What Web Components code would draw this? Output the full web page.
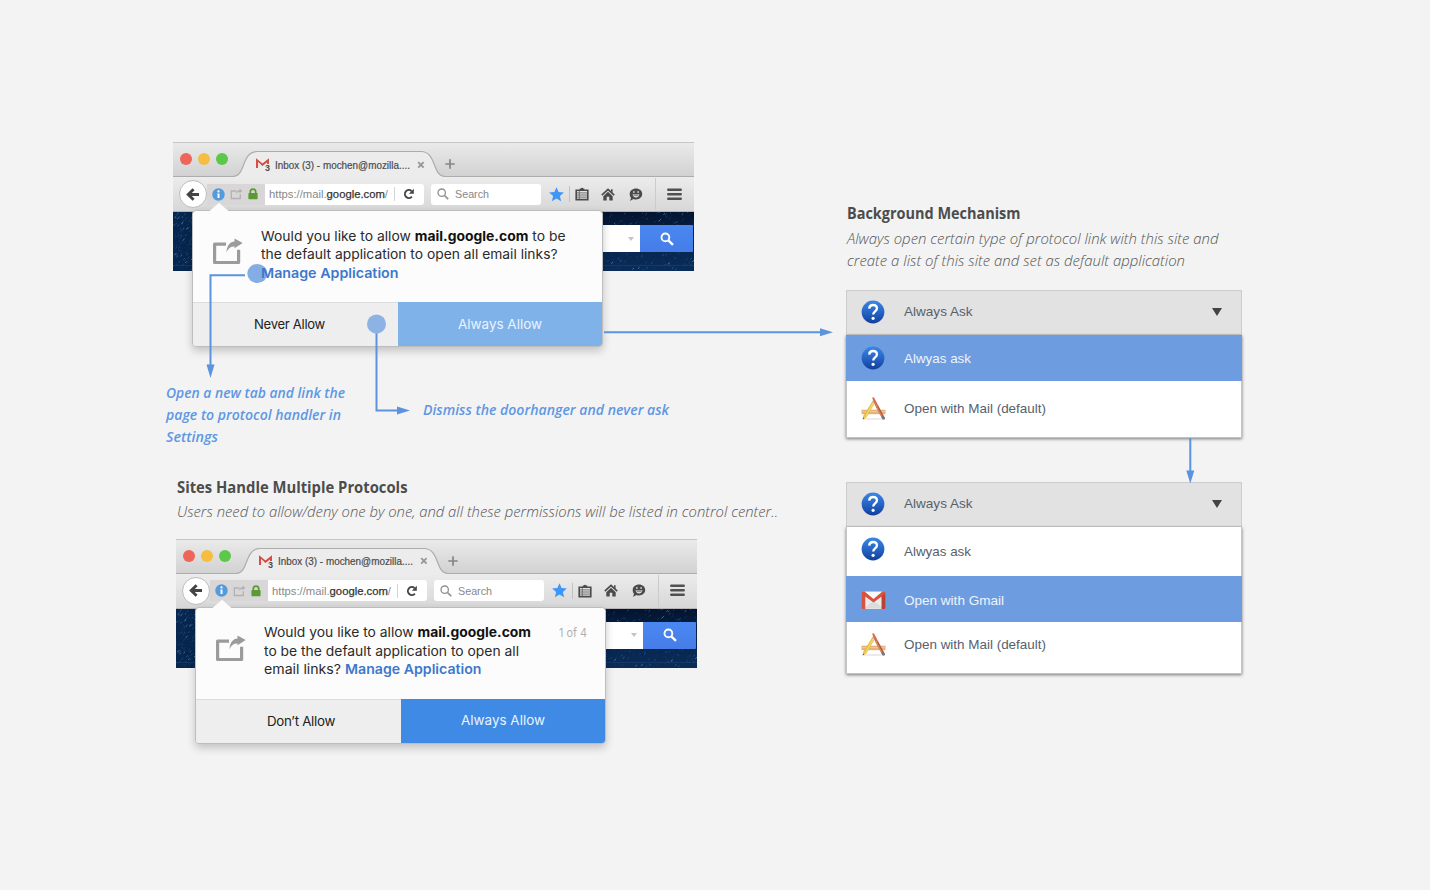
<!DOCTYPE html>
<html lang="en">
<head>
<meta charset="utf-8">
<title>Protocol handler permissions</title>
<style>
html,body{margin:0;background:#f3f3f3}
body{width:1430px;height:890px;overflow:hidden;font-family:"Liberation Sans",Arial,sans-serif}
</style>
</head>
<body>
<spec-board></spec-board>
<script>
const define=(name,css,html,after)=>{
  customElements.define(name,class extends HTMLElement{
    connectedCallback(){
      if(this.shadowRoot)return;
      const root=this.attachShadow({mode:'open'});
      const t=document.createElement('template');
      t.innerHTML='<style>'+css+'</style>'+(typeof html==='function'?html(this):html);
      root.appendChild(t.content.cloneNode(true));
      if(after)after(this,root);
    }
  });
};

/* One line of text set to a fixed measure */
define('fit-line',
 ':host{display:block;white-space:nowrap;flex:none}span{display:inline-block;transform-origin:0 50%}',
 '<span><slot></slot></span>',
 (el,root)=>{
   const w=+el.getAttribute('w'),s=root.querySelector('span');
   const m=s.offsetWidth;
   if(m)s.style.transform='scaleX('+(w/s.getBoundingClientRect().width)+')';
   el.style.width=w+'px';
 });

const ICONS={
 back:[14,13,'<path d="M7.6 1.2 2.2 6.5l5.4 5.3M2.8 6.5H13" fill="none" stroke="#444" stroke-width="2.9"/>'],
 info:[13,13,'<circle cx="6.5" cy="6.5" r="6.2" fill="#549bdc"/><circle cx="6.5" cy="3.4" r="1.1" fill="#fff"/><path d="M5.300 5.6h2.200v4.500H5.600V6.600H5.300z" fill="#fff"/>'],
 shareSmall:[13,12,'<path d="M6.500 3H1.300v7.500h9V6.200" fill="none" stroke="#b3b1b1" stroke-width="1.300"/><path d="M5.700 6.500C6 3.500 7.500 2.300 9.400 2.200V.6l3 2.400-3 2.300V3.900C7.800 3.900 6.600 4.600 5.700 6.500z" fill="#b3b1b1"/>'],
 lock:[10,12,'<path d="M2.300 6V3.900a2.700 2.700 0 0 1 5.400 0V6" fill="none" stroke="#5a9a33" stroke-width="1.700"/><rect x=".4" y="5" width="9.200" height="6.200" rx=".7" fill="#5a9a33"/>'],
 reload:[12,12,'<path d="M8.900 8.700A4 4 0 1 1 8.500 3" fill="none" stroke="#444" stroke-width="1.900"/><path d="M10.800.8v5H5.900z" fill="#444"/>'],
 search:[12,12,'<circle cx="4.700" cy="4.700" r="3.700" fill="none" stroke="#909090" stroke-width="1.300"/><path d="m7.500 7.500 3.700 3.700" stroke="#909090" stroke-width="1.700"/>'],
 searchWhite:[14,14,'<circle cx="5.400" cy="5.400" r="3.900" fill="none" stroke="#fff" stroke-width="1.900"/><path d="m8.300 8.300 4.700 4.500" stroke="#fff" stroke-width="2.400"/>'],
 star:[15,15,'<path d="m7.500.3 2.100 4.800 5.300.5-4 3.500 1.200 5.200-4.600-2.700-4.600 2.700 1.200-5.200-4-3.500 5.300-.5z" fill="#3e96f7"/>'],
 list:[14,14,'<path d="M1.200 3.300h11.600v9.300H1.200z" fill="none" stroke="#4a4a4a" stroke-width="1.600"/><path d="M4.700 3V1.600h1.100a1.300 1.300 0 0 1 2.400 0h1.100V3z" fill="#4a4a4a"/><path d="M2 5.900h10M2 8h10M2 10.100h10M4.300 4v8" stroke="#666" stroke-width=".9"/>'],
 home:[14,13,'<path d="M.8 7.200 7 1.400l6.200 5.800" fill="none" stroke="#4a4a4a" stroke-width="1.700"/><path d="M10 1.300h1.600v3.500L10 3.300zM7 3.800l4.700 4.400v4.300H8.300V8.800H5.700v3.700H2.300V8.200z" fill="#4a4a4a"/>'],
 smile:[14,13,'<path d="M7 .6c3.500 0 6.200 2.300 6.200 5.400S10.500 11.400 7 11.400c-.9 0-1.800-.1-2.600-.5-1 .9-2.200 1.500-3.600 1.500.8-.8 1.200-1.700 1.200-2.700C1 8.700.700 7.500.700 6 .700 2.900 3.500.6 7 .6z" fill="#4a4a4a"/><path d="M3.600 6.300h6.800c0 1.900-1.500 3.200-3.400 3.200S3.600 8.200 3.600 6.300zM4.300 3h1.200v2H4.300zm4.200 0h1.200v2H8.500z" fill="#ddd"/><path d="M4.500 7.200h5" stroke="#444" stroke-width=".7"/>'],
 menu:[15,13,'<path d="M1.300 1.800h12.400M1.300 6.300h12.400M1.300 10.800h12.400" stroke="#505050" stroke-width="2.500" stroke-linecap="round"/>'],
 close:[8,8,'<path d="m1.200 1.200 5.400 5.400m0-5.400L1.200 6.600" stroke="#979797" stroke-width="1.900"/>'],
 plus:[10,10,'<path d="M5 .3v9.400M.3 5h9.400" stroke="#858585" stroke-width="1.700"/>'],
 share:[31,27,'<path d="M14 6.100H2.600v18.400h24V11.800" fill="none" stroke="#9b9b9b" stroke-width="3.200" stroke-linejoin="round"/><path d="M14.500 14.300C14.800 7.700 18 3.900 22.500 3.600V.4l8.200 4.700-8.200 5.200V8.400c-3.800-.2-6.200 1.700-8 5.900z" fill="#9b9b9b"/>'],
 tabmail:[13,13,'<path d="M1 10V2.200l5.500 4.600L12 2.200V6" fill="none" stroke="#d3493d" stroke-width="1.900"/><path d="M2 9.500V4l3 2.600" fill="#f6dfdc"/>'],
 help:[24,24,'<defs><linearGradient id="g" x1="0" y1="0" x2="0" y2="1"><stop stop-color="#3a87e4"/><stop offset=".5" stop-color="#2665c6"/><stop offset="1" stop-color="#123f9c"/></linearGradient></defs><circle cx="12" cy="12" r="11.400" fill="url(#g)"/><path d="M8.200 8.600C8.300 6.300 9.900 5 12 5c2.300 0 3.900 1.400 3.900 3.400 0 3-3.700 3-3.700 6.100" fill="none" stroke="#fff" stroke-width="2.300"/><circle cx="12.100" cy="18.300" r="1.600" fill="#fff"/>'],
 gmail:[25,20,'<rect x="1" y="1.500" width="23" height="17.500" rx="1.500" fill="#ececec"/><path d="m3 18.500 9.500-8 9.500 8z" fill="#dcdcdc"/><path d="m3 2 9.500 8L22 2z" fill="#fafafa"/><path d="M.8 3.200C.8 1.500 2.600.8 3.900 1.800l8.600 7.100 8.600-7.100c1.300-1 3.100-.3 3.100 1.400v14.600c0 .8-.5 1.200-1.200 1.200h-2.300V6.600l-8.200 6-8.200-6V19H2c-.7 0-1.200-.4-1.200-1.200z" fill="#d95140"/><path d="M20.700 6.600 24.200 3v14.800c0 .8-.5 1.200-1.200 1.200h-2.300z" fill="#bb4232"/>'],
 apps:[25,24,'<ellipse cx="12.500" cy="22" rx="10" ry="1" fill="#eaeaea"/><path d="M.5 12.700h24v4.500H.5z" fill="#e6b27c"/><path d="M.5 14.500h24" stroke="#f2cc9f" stroke-width=".8"/><path d="m11.200 4.500 2.700 1.400L5 21l-3.200 1.400.4-3.400z" fill="#e7bb3e"/><path d="m12 5 1.200.7-9 15-1.300.5z" fill="#f4dc78"/><path d="m10.900 4.900 1-1.700 2.600 1.300-.9 1.600z" fill="#bbb"/><path d="m1.700 22.500.3-1.900 1.300.8z" fill="#555"/><path d="m11.100.8 1.800-.5L17 8l-2.500 1.300z" fill="#d96b45"/><path d="m14.500 9.300 2.500-1.300 7 13.200-.9 1.400-1.600-.3z" fill="#b65a3b"/><path d="m15.300 9 6.700 12.700" stroke="#e8a37f" stroke-width=".8"/><path d="m20.200 19.800 2.300-1.200 1.600 3-.9 1-1.600-.3z" fill="#777"/>']
};
define('ui-icon',':host{display:block;flex:none;line-height:0}svg{display:block}',
 el=>{const[w,h,b]=ICONS[el.getAttribute('name')];return`<svg width="${w}" height="${h}" viewBox="0 0 ${w} ${h}">${b}</svg>`});

define('browser-tabs',`
:host{display:flex;height:35px;box-sizing:border-box;position:relative;border-top:1px solid #c5c5c5;background:linear-gradient(#eaeaea,#d1d1d1);align-items:center;color:#4b4b4b;font-size:11px}
.lights{display:flex;gap:6px;padding:0 0 2px 7px;flex:none;width:64px}
.lights i{width:12px;height:12px;border-radius:50%;background:#ee6559}
.lights i:nth-child(2){background:#f6be41}.lights i:nth-child(3){background:#5cc849}
.shape{position:absolute;left:0;top:0}
.tab{display:flex;align-items:center;position:relative;padding:9px 0 0 12px}
fit-line{margin-left:6px;-webkit-text-stroke:.2px #4b4b4b}.x{margin-left:6.500px}.p{margin:8px 0 0 20px;position:relative}
.badge{position:relative}.badge b{position:absolute;right:-1px;bottom:-2px;font:bold 9px/9px "Liberation Sans",Arial,sans-serif}
`,`<svg class="shape" width="521" height="35"><path d="M0 33.500H60C73 33.500 68 8.500 84 8.500H248C264 8.500 259 33.500 272 33.500H521V35H0z" fill="#ececec"/><path d="M0 33.500H60C73 33.500 68 8.500 84 8.500H248C264 8.500 259 33.500 272 33.500H521" fill="none" stroke="#acacac" stroke-width="1.200"/></svg>
<div class="lights"><i></i><i></i><i></i></div>
<div class="tab"><div class="badge"><ui-icon name="tabmail"></ui-icon><b>3</b></div><fit-line w="135">Inbox (3) - mochen@mozilla....</fit-line><ui-icon class="x" name="close"></ui-icon></div>
<ui-icon class="p" name="plus"></ui-icon>`);

define('browser-toolbar',`
:host{display:flex;height:35px;box-sizing:border-box;background:linear-gradient(#ececec,#d7d7d7);border-bottom:1px solid #b5b5b5;align-items:center;font-size:11.500px;color:#888}
.back{width:26px;height:26px;border-radius:50%;background:#fff;border:1px solid #bcbcbc;display:grid;place-items:center;margin-left:6px;flex:none;z-index:1}
.id{display:flex;align-items:center;gap:5px;background:#d8d6d6;height:21px;width:58px;box-sizing:border-box;padding-left:5px;margin-left:0;flex:none}
.url{display:flex;align-items:center;background:#fff;height:21px;width:159px;border-radius:0 3px 3px 0;box-sizing:border-box;padding-left:4px;flex:none}
.url b{font-weight:400;color:#333;-webkit-text-stroke:.25px #333}
.sep{width:1px;height:14px;background:#d5d5d5;margin:0 8px 0 6px}
.search{display:flex;align-items:center;gap:6px;background:#fff;height:21px;width:110px;border-radius:3px;box-sizing:border-box;padding-left:5.500px;margin-left:7px;flex:none}
.s2{width:1px;height:16px;background:#c2c2c2;margin:0 5px 0 4.500px}.s3{width:1px;height:32px;background:#cbcbcb;margin:0 11px 0 12px}
`,`<div class="back"><ui-icon name="back"></ui-icon></div>
<div class="id"><ui-icon name="info"></ui-icon><ui-icon name="shareSmall"></ui-icon><ui-icon name="lock"></ui-icon></div>
<div class="url"><fit-line w="119">https://mail.<b>google.com</b>/</fit-line><div class="sep"></div><ui-icon name="reload"></ui-icon></div>
<div class="search"><ui-icon name="search"></ui-icon><fit-line w="34">Search</fit-line></div>
<ui-icon name="star" style="margin-left:8px"></ui-icon><div class="s2"></div><ui-icon name="list"></ui-icon><ui-icon name="home" style="margin-left:12.500px"></ui-icon><ui-icon name="smile" style="margin-left:14px"></ui-icon><div class="s3"></div><ui-icon name="menu"></ui-icon>`);

define('starry-page',`
:host{display:flex;height:59px;position:relative;justify-content:flex-end;padding:13px 1px 0 0;box-sizing:border-box;background:linear-gradient(#04142f,#07264f 60%,#0a2c58)}
svg.sky{position:absolute;inset:0}
.left{position:absolute;left:0;top:0;width:22px;height:59px;background:#07264e}
.field{width:60px;height:27px;background:linear-gradient(90deg,#e4e4e4,#fff 45%);position:relative;display:flex;align-items:center;justify-content:flex-end}
.field i{border:3px solid transparent;border-top:4px solid #c4c4c4;border-bottom:0;margin-right:6px}
.go{width:53px;height:27px;background:linear-gradient(#4a87f2,#467de8);display:grid;place-items:center;position:relative;border-radius:0 1px 1px 0}
`,()=>{
 let s='',r=7;const n=()=>(r=(r*16807)%2147483647)/2147483647;
 for(let i=0;i<420;i++){const left=i%3===0;const x=left?n()*22:425+n()*96,y=n()*59,l=.6+n()*1.400;s+=`<path d="M${x.toFixed(1)} ${y.toFixed(1)}l${l.toFixed(1)} ${(-l*.9).toFixed(1)}" stroke="${['#164a80','#1f5c99','#0d3866','#5587b5'][Math.floor(n()*3.300)]}" stroke-width=".8"/>`}
 return`<div class="left"></div><svg class="sky" width="521" height="59">${s}<path d="M0 53.500h521" stroke="#1c3f68" stroke-width=".7"/></svg><div class="field"><i></i></div><div class="go"><ui-icon name="searchWhite"></ui-icon></div>`});

define('door-hanger',`
:host{display:flex;flex-direction:column;width:411px;height:137px;box-sizing:border-box;border:1px solid #bdbdbd;border-radius:4px;background:#fcfcfc;box-shadow:0 4px 9px rgba(0,0,0,.2);font-family:Inter,"Liberation Sans",sans-serif;position:relative}
.tip{position:absolute;left:16px;top:-9px}
.body{display:flex;height:91px;flex:none;padding-left:19px;box-sizing:border-box}
.body>ui-icon{margin-top:27px}
.msg{margin:15.500px 0 0 18px;font-size:13.500px;line-height:18.600px;color:#2a2a2a;flex:none}
.count{margin:16px 0 0 auto;padding-right:18px;font-size:11.500px;line-height:18px;color:#b0b0b0}
.actions{display:flex;flex:1;font-size:13.500px;color:#222;border-radius:0 0 3px 3px;overflow:hidden}
.actions>div{flex:1;display:grid;place-items:center;padding-bottom:1px}
.no{border-top:1px solid #dcdcdc;background:#eee;letter-spacing:-.3px}.yes{background:var(--accent,#3f8ae5);color:#eaf3fd}
`,`<svg class="tip" width="20" height="10"><path d="M0 9.500 10 .7l10 8.800z" fill="#fcfcfc"/></svg>
<div class="body"><ui-icon name="share"></ui-icon><div class="msg"><slot name="message"></slot></div><div class="count"><slot name="count"></slot></div></div>
<div class="actions"><div class="no"><slot name="deny"></slot></div><div class="yes"><slot name="allow"></slot></div></div>`);

define('browser-mock',`
:host{display:block;position:relative;width:521px;height:129px}
.win{display:flex;flex-direction:column;box-shadow:inset 1px 0 0 #d5d5d5}
::slotted(door-hanger){position:absolute;left:19px;top:68px}
`,`<div class="win"><browser-tabs></browser-tabs><browser-toolbar></browser-toolbar><starry-page></starry-page></div><slot></slot>`);

define('handler-option',`
:host{display:flex;align-items:center;box-sizing:border-box;color:#56616d;font-size:13.300px;height:46px;padding-left:14px;border-left:1px solid #c4c4c4;border-right:1px solid #c4c4c4;background:#fff}
:host([selected]){background:#6d9de0;color:#eef4fd;border-color:#6d9de0;padding-top:2px}
.i{width:25px;display:grid;place-items:center;margin-right:18.500px}
`,el=>`<div class="i"><ui-icon name="${el.getAttribute('icon')}" style="transform:translateY(${el.getAttribute('dy')||0}px)"></ui-icon></div><slot></slot>`);

define('handler-select',`
:host{display:block;width:396.500px}
.head{height:44.500px;box-sizing:border-box;display:flex;align-items:center;border:1px solid #cdcdcd;background:#e2e2e2;color:#56616d;font-size:13.300px;padding:0 19.500px 0 14px}
.head fit-line{margin-top:-1px}
.i{width:25px;display:grid;place-items:center;margin-right:18.500px}
.v{margin-left:auto;border:5px solid transparent;border-top:8px solid #444;border-bottom:0}
.list{box-shadow:0 1px 3px rgba(0,0,0,.5);border-bottom:1px solid #c4c4c4}
`,`<div class="head"><div class="i"><ui-icon name="help"></ui-icon></div><fit-line w="68.500">Always Ask</fit-line><i class="v"></i></div><div class="list"><slot></slot></div>`);

define('section-title',`
:host{display:block;font-family:"Open Sans","Noto Sans",sans-serif;color:#555;font-size:14.500px;line-height:22px;font-style:italic;font-weight:300}
.t{font-style:normal;font-weight:700;color:#4c4c4c;font-size:15.500px;line-height:22px;margin-bottom:4px}
`,`<div class="t"><slot name="title"></slot></div><slot></slot>`);

define('call-out',`:host{display:block;font:italic 600 14px/22px "Open Sans","Noto Sans",sans-serif;color:#5f97e3}`,'<slot></slot>');

define('flow-arrows',`:host{display:block;position:absolute;left:0;top:0;pointer-events:none}svg{display:block}`,
`<svg width="1430" height="890"><g fill="none" stroke="#5b93df" stroke-width="2"><path d="M245 275.300H210.500V366"/><path d="M376.500 324V410.500H399"/><path d="M604 332.200H822" /><path d="M1190.300 438V472"/></g>
<g fill="#5b93df"><path d="M206.500 364.500h8l-4 13.500zM397 406.500v8l13-4zM820 328.200v8l13-4zM1186.300 470.500h8l-4 13z"/></g>
<g fill="#8db2e4"><circle cx="376.500" cy="324" r="9.500"/></g></svg>`);

define('spec-board',`
:host{display:flex;position:relative;width:1430px;height:890px;box-sizing:border-box;background:#f3f3f3}
.left{width:845.500px;padding:142px 0 0 166px;flex:none;box-sizing:border-box}
.right{padding-top:202px}
.first{margin-left:7px}.second{margin:15.500px 0 0 10px}
.first door-hanger{--accent:#80b2ea}
.notes{display:flex;margin-top:110.500px;height:66px;align-items:flex-start}
.notes call-out{margin-left:-.5px}
.notes call-out+call-out{margin:17.500px 0 0 78.500px}
.left section-title{margin:28.500px 0 0 10.500px}
.left section-title>:not([slot]){margin-top:-1px}
a{color:#3d78cc;font-weight:600;position:relative}
strong{color:#111;font-weight:700}
.first a::before{content:"";position:absolute;left:-13px;top:-1px;width:19px;height:19px;border-radius:50%;background:#84ade5;z-index:-1}
.first [slot=message]{position:relative;z-index:0}
.right section-title{margin-left:1.500px}
.s1{margin-top:18px}.s2{margin-top:44.500px}
`,`<div class="left">
<browser-mock class="first"><door-hanger><div slot="message"><fit-line w="304.500">Would you like to allow <strong>mail.google.com</strong> to be</fit-line><fit-line w="296.500">the default application to open all email links?</fit-line><fit-line w="137.500"><a>Manage Application</a></fit-line></div><fit-line w="71" slot="deny" style="margin-right:11px">Never Allow</fit-line><fit-line w="84" slot="allow">Always Allow</fit-line></door-hanger></browser-mock>
<div class="notes"><call-out><fit-line w="179">Open a new tab and link the</fit-line><fit-line w="175">page to protocol handler in</fit-line><fit-line w="52">Settings</fit-line></call-out><call-out><fit-line w="246">Dismiss the doorhanger and never ask</fit-line></call-out></div>
<section-title><fit-line w="230.500" slot="title">Sites Handle Multiple Protocols</fit-line><fit-line w="601">Users need to allow/deny one by one, and all these permissions will be listed in control center..</fit-line></section-title>
<browser-mock class="second"><door-hanger><div slot="message"><fit-line w="267">Would you like to allow <strong>mail.google.com</strong></fit-line><fit-line w="255">to be the default application to open all</fit-line><fit-line w="217.500">email links? <a>Manage Application</a></fit-line></div><fit-line slot="count" w="28">1 of 4</fit-line><fit-line w="68" slot="deny" style="margin-left:5px">Don’t Allow</fit-line><fit-line w="84" slot="allow">Always Allow</fit-line></door-hanger></browser-mock>
</div>
<div class="right">
<section-title><fit-line w="173.500" slot="title">Background Mechanism</fit-line><fit-line w="371.500">Always open certain type of protocol link with this site and</fit-line><fit-line w="338">create a list of this site and set as default application</fit-line></section-title>
<handler-select class="s1"><handler-option icon="help" selected dy="-1"><fit-line w="67">Alwyas ask</fit-line></handler-option><handler-option icon="apps" style="height:56px"><fit-line w="142">Open with Mail (default)</fit-line></handler-option></handler-select>
<handler-select class="s2"><handler-option icon="help" dy="-2" style="height:49px"><fit-line w="67">Alwyas ask</fit-line></handler-option><handler-option icon="gmail" dy="-1" selected style="height:46.500px;padding-top:4px"><fit-line w="100">Open with Gmail</fit-line></handler-option><handler-option icon="apps" style="height:51px;padding-bottom:6px"><fit-line w="142">Open with Mail (default)</fit-line></handler-option></handler-select>
</div>
<flow-arrows></flow-arrows>`);
</script>
</body>
</html>
